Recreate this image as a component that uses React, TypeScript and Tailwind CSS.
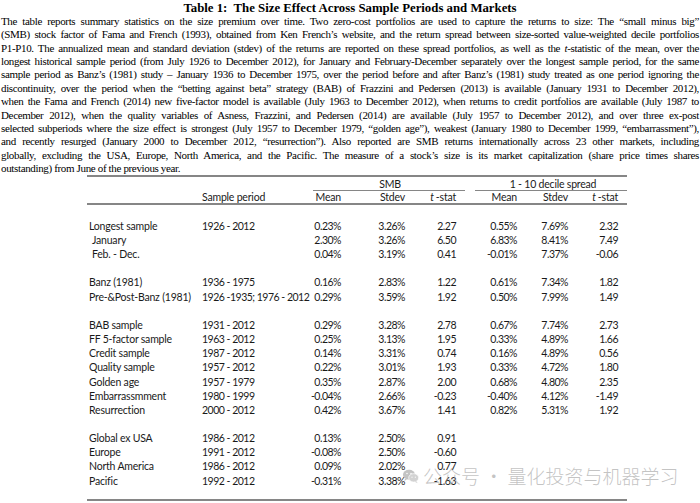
import React from "react";

type Row = { label: string; period?: string; v: string[]; indent?: boolean } | null;

const lines: React.ReactNode[] = [
  "The table reports summary statistics on the size premium over time. Two zero-cost portfolios are used to capture the returns to size: The \u201csmall minus big\u201d",
  "(SMB) stock factor of Fama and French (1993), obtained from Ken French\u2019s website, and the return spread between size-sorted value-weighted decile portfolios",
  <>P1-P10. The annualized mean and standard deviation (stdev) of the returns are reported on these spread portfolios, as well as the <i>t</i>-statistic of the mean, over the</>,
  "longest historical sample period (from July 1926 to December 2012), for January and February-December separately over the longest sample period, for the same",
  "sample period as Banz\u2019s (1981) study \u2013 January 1936 to December 1975, over the period before and after Banz\u2019s (1981) study treated as one period ignoring the",
  "discontinuity, over the period when the \u201cbetting against beta\u201d strategy (BAB) of Frazzini and Pedersen (2013) is available (January 1931 to December 2012),",
  "when the Fama and French (2014) new five-factor model is available (July 1963 to December 2012), when returns to credit portfolios are available (July 1987 to",
  "December 2012), when the quality variables of Asness, Frazzini, and Pedersen (2014) are available (July 1957 to December 2012), and over three ex-post",
  "selected subperiods where the size effect is strongest (July 1957 to December 1979, \u201cgolden age\u201d), weakest (January 1980 to December 1999, \u201cembarrassment\u201d),",
  "and recently resurged (January 2000 to December 2012, \u201cresurrection\u201d). Also reported are SMB returns internationally across 23 other markets, including",
  "globally, excluding the USA, Europe, North America, and the Pacific. The measure of a stock\u2019s size is its market capitalization (share price times shares",
];

const rows: Row[] = [
  { label: "Longest sample", period: "1926 - 2012", v: ["0.23%", "3.26%", "2.27", "0.55%", "7.69%", "2.32"] },
  { label: "January", indent: true, v: ["2.30%", "3.26%", "6.50", "6.83%", "8.41%", "7.49"] },
  { label: "Feb. - Dec.", indent: true, v: ["0.04%", "3.19%", "0.41", "-0.01%", "7.37%", "-0.06"] },
  null,
  { label: "Banz (1981)", period: "1936 - 1975", v: ["0.16%", "2.83%", "1.22", "0.61%", "7.34%", "1.82"] },
  { label: "Pre-&Post-Banz (1981)", period: "1926 -1935; 1976 - 2012", v: ["0.29%", "3.59%", "1.92", "0.50%", "7.99%", "1.49"] },
  null,
  { label: "BAB sample", period: "1931 - 2012", v: ["0.29%", "3.28%", "2.78", "0.67%", "7.74%", "2.73"] },
  { label: "FF 5-factor sample", period: "1963 - 2012", v: ["0.25%", "3.13%", "1.95", "0.33%", "4.89%", "1.66"] },
  { label: "Credit sample", period: "1987 - 2012", v: ["0.14%", "3.31%", "0.74", "0.16%", "4.89%", "0.56"] },
  { label: "Quality sample", period: "1957 - 2012", v: ["0.22%", "3.01%", "1.93", "0.33%", "4.72%", "1.80"] },
  { label: "Golden age", period: "1957 - 1979", v: ["0.35%", "2.87%", "2.00", "0.68%", "4.80%", "2.35"] },
  { label: "Embarrassmment", period: "1980 - 1999", v: ["-0.04%", "2.66%", "-0.23", "-0.40%", "4.12%", "-1.49"] },
  { label: "Resurrection", period: "2000 - 2012", v: ["0.42%", "3.67%", "1.41", "0.82%", "5.31%", "1.92"] },
  null,
  { label: "Global ex USA", period: "1986 - 2012", v: ["0.13%", "2.50%", "0.91", "", "", ""] },
  { label: "Europe", period: "1991 - 2012", v: ["-0.08%", "2.50%", "-0.60", "", "", ""] },
  { label: "North America", period: "1986 - 2012", v: ["0.09%", "2.02%", "0.77", "", "", ""] },
  { label: "Pacific", period: "1992 - 2012", v: ["-0.31%", "3.38%", "-1.63", "", "", ""] },
];

const grid = "grid grid-cols-[113px_105px_36px_64px_51px_61px_51px_50px_9px]";
const cell = "flex justify-end whitespace-nowrap tracking-[-0.5px]";

export default function App() {
  return (
    <div className="w-[700px] h-[503px] bg-white overflow-hidden relative text-black">
      <h1 className="text-center font-bold text-[12.8px] leading-[13px] pt-[2px] font-['Liberation_Serif',serif]">
        Table 1:&nbsp; The Size Effect Across Sample Periods and Markets
      </h1>
      <div className="px-px text-[11px] tracking-[-0.35px] leading-[13.36px] font-['Liberation_Serif',serif]">
        {lines.map((l, i) => (
          <div key={i} className="text-justify [text-align-last:justify]">
            {l}
          </div>
        ))}
        <div>outstanding) from June of the previous year.</div>
      </div>

      <div className="ml-[87px] w-[540px] font-['Lato',sans-serif] text-[10.5px] tracking-[-0.2px] text-[#1a1a1a]">
        <div className="border-t-2 border-[#868686]" />
        <div className="flex h-[13px] leading-[13px] mt-px">
          <div className="ml-[226px] w-[152px] text-center border-b-[1.5px] border-[#868686] pl-[2px]">SMB</div>
          <div className="ml-[10px] w-[152px] text-center border-b-[1.5px] border-[#868686] pl-[4px]">1 - 10 decile spread</div>
        </div>
        <div className={`${grid} h-[11.5px] leading-[11px] items-center`}>
          <div />
          <div className="pl-[2px] whitespace-nowrap">Sample period</div>
          <div className="flex justify-end whitespace-nowrap">Mean</div>
          <div className="flex justify-end whitespace-nowrap">Stdev</div>
          <div className="flex justify-end whitespace-nowrap">
            <i className="mr-[2px]">t</i>-stat
          </div>
          <div className="flex justify-end whitespace-nowrap">Mean</div>
          <div className="flex justify-end whitespace-nowrap">Stdev</div>
          <div className="flex justify-end whitespace-nowrap">
            <i className="mr-[2px]">t</i>-stat
          </div>
          <div />
        </div>
        <div className="border-t-2 border-[#868686]" />
        <div className="h-[14px]" />
        {rows.map((r, i) =>
          r ? (
            <div key={i} className={`${grid} h-[14.17px] leading-[14.17px]`}>
              <div className={`whitespace-nowrap ${r.indent ? "pl-[5px]" : "pl-[2px]"}`}>{r.label}</div>
              <div className="whitespace-nowrap pl-[2px] tracking-[-0.5px]">{r.period ?? ""}</div>
              {r.v.map((v, j) => (
                <div key={j} className={cell}>
                  {v}
                </div>
              ))}
              <div />
            </div>
          ) : (
            <div key={i} className="h-[14.17px]" />
          )
        )}
        <div className="h-[11px]" />
        <div className="border-t-2 border-[#868686]" />
      </div>

      <div className="absolute left-[403px] top-[464px] flex items-center gap-[4px] text-[19px] leading-[24px] text-[#9c9c9c]/60 font-['Noto_Sans_CJK_SC',sans-serif] font-light">
        <svg width="16" height="15" viewBox="0 0 24 22" className="opacity-80">
          <ellipse cx="9" cy="8.5" rx="9" ry="7.5" fill="#b5b5b5" />
          <path d="M3 14 L2 18 L6 15 Z" fill="#b5b5b5" />
          <ellipse cx="16" cy="13" rx="7.5" ry="6.3" fill="#c7c7c7" stroke="#fff" strokeWidth="1" />
          <path d="M20 18 L22 21 L17.5 19 Z" fill="#c7c7c7" />
          <circle cx="6" cy="6.5" r="1.1" fill="#fff" />
          <circle cx="12" cy="6.5" r="1.1" fill="#fff" />
          <circle cx="13.5" cy="12" r="0.9" fill="#fff" />
          <circle cx="18.5" cy="12" r="0.9" fill="#fff" />
        </svg>
        <span>公众号 · 量化投资与机器学习</span>
      </div>
    </div>
  );
}
